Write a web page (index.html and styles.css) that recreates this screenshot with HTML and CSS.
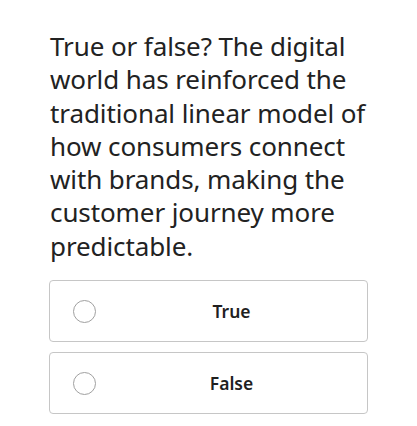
FILE: index.html
```html
<!DOCTYPE html>
<html lang="en">
<head>
    <meta charset="UTF-8">
    <meta name="viewport" content="width=device-width, initial-scale=1.0">
    <title>Quiz Question</title>
    <link rel="stylesheet" href="styles.css">
</head>
<body>
    <div class="quiz">
        <p class="question">True or false? The digital world has reinforced the traditional linear model of how consumers connect with brands, making the customer journey more predictable.</p>

        <div class="options">
            <label class="option">
                <input type="radio" name="answer" value="true">
                <span class="option-text">True</span>
            </label>
            <label class="option">
                <input type="radio" name="answer" value="false">
                <span class="option-text">False</span>
            </label>
        </div>
    </div>
</body>
</html>
```

FILE: styles.css
```css
body {
    margin: 0;
    padding: 0;
    background-color: #fff;
    color: #202124;
    font-family: "Noto Sans", Arial, sans-serif;
}

.quiz {
    padding: 30px 49px 0 49px;
}

.question {
    margin: 0 0 17px 1px;
    font-size: 26px;
    line-height: 33.3px;
    letter-spacing: -0.1px;
    color: #222;
}

.options {
    display: flex;
    flex-direction: column;
    gap: 10px;
}

.option {
    display: flex;
    align-items: center;
    height: 60px;
    border: 1px solid #c6c6c6;
    border-radius: 4px;
    padding-left: 23px;
    cursor: pointer;
}

.option input {
    appearance: none;
    width: 23px;
    height: 23px;
    margin: 0;
    border: 1.5px solid #a0a0a0;
    border-radius: 50%;
    box-sizing: border-box;
}

.option-text {
    flex: 1;
    text-align: center;
    font-size: 17.5px;
    font-weight: 600;
    color: #1f1f1f;
}
```
